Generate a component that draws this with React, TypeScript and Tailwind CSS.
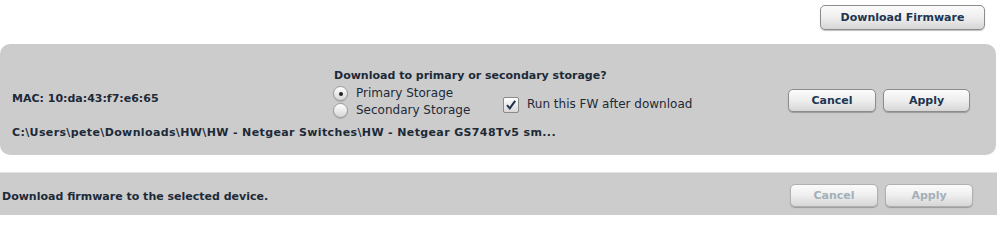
import React from "react";

const font = { fontFamily: '"DejaVu Sans", Verdana, sans-serif' };

function Btn({ label, w, disabled }: { label: string; w: string; disabled?: boolean }) {
  return (
    <button
      className={
        "h-[23px] rounded-[5px] border text-[11px] font-bold bg-gradient-to-b from-[#fbfbfb] via-[#eeeeee] to-[#d6d6d6] shadow-[0_1px_1px_rgba(0,0,0,0.25)] " +
        w +
        (disabled ? " border-[#b0b0b0] text-[#a2b0b8]" : " border-[#8c8c8c] text-[#1d3550]")
      }
    >
      {label}
    </button>
  );
}

function Radio({ checked }: { checked?: boolean }) {
  return (
    <span className="w-[15px] h-[15px] rounded-full border border-[#9a9a9a] bg-gradient-to-b from-[#ffffff] to-[#d6d6d6] shadow-[0_1px_1px_rgba(0,0,0,0.15)] flex items-center justify-center shrink-0">
      {checked && <span className="w-[4px] h-[4px] rounded-full bg-[#222]" />}
    </span>
  );
}

export default function App() {
  return (
    <div className="w-[999px] h-[215px] bg-white overflow-hidden text-[11px] leading-[13px] text-[#1c2a38]" style={font}>
      <div className="flex justify-end pr-[14px] pt-[5px] h-[44px]">
        <Btn label="Download Firmware" w="w-[165px] h-[25px]" />
      </div>
      <div className="w-[996px] h-[111px] rounded-[10px] bg-[#cccccc] pt-[25px] pl-[12px] pr-[26px] flex flex-col">
        <div className="flex items-start">
          <div className="w-[321px] font-bold mt-[23px]">MAC: 10:da:43:f7:e6:65</div>
          <div className="flex flex-col">
            <div className="font-bold pl-[1px]">Download to primary or secondary storage?</div>
            <div className="flex">
              <div className="flex flex-col mt-[4px] gap-[2px] w-[170px] text-[12px] leading-[15px]">
                <div className="flex items-center gap-[8px]">
                  <Radio checked />
                  <span>Primary Storage</span>
                </div>
                <div className="flex items-center gap-[8px]">
                  <Radio />
                  <span>Secondary Storage</span>
                </div>
              </div>
              <div className="flex items-center gap-[8px] mt-[14px] h-[17px] text-[12px]">
                <span className="w-[16px] h-[16px] border border-[#8a8a8a] rounded-[2px] bg-gradient-to-b from-[#ffffff] to-[#d8d8d8] flex items-center justify-center">
                  <svg width="12" height="12" viewBox="0 0 12 12">
                    <path d="M2 6.2 L4.8 9.3 L10.2 1.8" fill="none" stroke="#1f3048" strokeWidth="2" />
                  </svg>
                </span>
                <span>Run this FW after download</span>
              </div>
            </div>
          </div>
          <div className="ml-auto flex gap-[7px] mt-[20px]">
            <Btn label="Cancel" w="w-[88px]" />
            <Btn label="Apply" w="w-[87px]" />
          </div>
        </div>
        <div className="font-bold mt-[8px] tracking-[0.37px]">
          C:\Users\pete\Downloads\HW\HW - Netgear Switches\HW - Netgear GS748Tv5 sm...
        </div>
      </div>
      <div className="h-[17px]" />
      <div className="w-[997px] h-[60px] bg-[#cccccc] border-t border-[#e4e4e4] flex items-start pl-[2px] pr-[24px] pt-[11px]">
        <div className="font-bold mt-[6px]">Download firmware to the selected device.</div>
        <div className="ml-auto flex gap-[7px]">
          <Btn label="Cancel" w="w-[88px]" disabled />
          <Btn label="Apply" w="w-[88px]" disabled />
        </div>
      </div>
    </div>
  );
}
